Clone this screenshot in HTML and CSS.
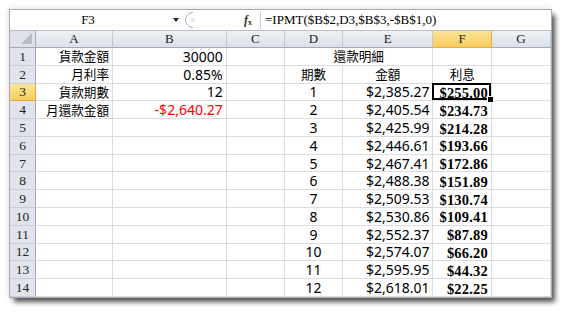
FILE: index.html
```html
<!DOCTYPE html>
<html lang="zh-Hant">
<head>
  <meta charset="UTF-8" />
  <title>IPMT</title>
  <link rel="stylesheet" href="styles.css">
</head>
<body>
  <div class="window">
    <div class="formula-bar">
      <div class="name-box">F3</div>
      <svg class="drop" width="12" height="8" viewBox="0 0 12 8"><polygon points="3,2 9,2 6,6" fill="#222"/></svg>
      <svg class="grip" width="20" height="18" viewBox="0 0 20 18"><path d="M10 1.5 A7.5 7.5 0 0 0 10 16.5" fill="none" stroke="#a9afb8" stroke-width="1"/><path d="M8 8h4M8 10h4" stroke="#d0d4da" stroke-width="1"/></svg>
      <span class="fx"><i>f</i><sub>x</sub></span>
      <div class="formula">=IPMT($B$2,D3,$B$3,-$B$1,0)</div>
    </div>

    <div class="sheet">
      <div class="corner"><svg width="11" height="11" viewBox="0 0 11 11"><polygon points="11,0 11,11 0,11" fill="#b8bec7"/></svg></div>
      <div class="ch">A</div>
      <div class="ch">B</div>
      <div class="ch">C</div>
      <div class="ch">D</div>
      <div class="ch">E</div>
      <div class="ch on">F</div>
      <div class="ch">G</div>

      <div class="rh">1</div>
      <div class="c lbl r">貨款金額</div>
      <div class="c r">30000</div>
      <div class="c"></div>
      <div class="c lbl ctr span2">還款明細</div>
      <div class="c"></div>
      <div class="c"></div>

      <div class="rh">2</div>
      <div class="c lbl r">月利率</div>
      <div class="c r">0.85%</div>
      <div class="c"></div>
      <div class="c lbl ctr">期數</div>
      <div class="c lbl ctr">金額</div>
      <div class="c lbl ctr">利息</div>
      <div class="c"></div>

      <div class="rh on">3</div>
      <div class="c lbl r">貨款期數</div>
      <div class="c r">12</div>
      <div class="c"></div>
      <div class="c ctr">1</div>
      <div class="c r">$2,385.27</div>
      <div class="c r int sel">$255.00</div>
      <div class="c"></div>

      <div class="rh">4</div>
      <div class="c lbl r">月還款金額</div>
      <div class="c r neg">-$2,640.27</div>
      <div class="c"></div>
      <div class="c ctr">2</div>
      <div class="c r">$2,405.54</div>
      <div class="c r int">$234.73</div>
      <div class="c"></div>

      <div class="rh">5</div>
      <div class="c"></div>
      <div class="c"></div>
      <div class="c"></div>
      <div class="c ctr">3</div>
      <div class="c r">$2,425.99</div>
      <div class="c r int">$214.28</div>
      <div class="c"></div>

      <div class="rh">6</div>
      <div class="c"></div>
      <div class="c"></div>
      <div class="c"></div>
      <div class="c ctr">4</div>
      <div class="c r">$2,446.61</div>
      <div class="c r int">$193.66</div>
      <div class="c"></div>

      <div class="rh">7</div>
      <div class="c"></div>
      <div class="c"></div>
      <div class="c"></div>
      <div class="c ctr">5</div>
      <div class="c r">$2,467.41</div>
      <div class="c r int">$172.86</div>
      <div class="c"></div>

      <div class="rh">8</div>
      <div class="c"></div>
      <div class="c"></div>
      <div class="c"></div>
      <div class="c ctr">6</div>
      <div class="c r">$2,488.38</div>
      <div class="c r int">$151.89</div>
      <div class="c"></div>

      <div class="rh">9</div>
      <div class="c"></div>
      <div class="c"></div>
      <div class="c"></div>
      <div class="c ctr">7</div>
      <div class="c r">$2,509.53</div>
      <div class="c r int">$130.74</div>
      <div class="c"></div>

      <div class="rh">10</div>
      <div class="c"></div>
      <div class="c"></div>
      <div class="c"></div>
      <div class="c ctr">8</div>
      <div class="c r">$2,530.86</div>
      <div class="c r int">$109.41</div>
      <div class="c"></div>

      <div class="rh">11</div>
      <div class="c"></div>
      <div class="c"></div>
      <div class="c"></div>
      <div class="c ctr">9</div>
      <div class="c r">$2,552.37</div>
      <div class="c r int">$87.89</div>
      <div class="c"></div>

      <div class="rh">12</div>
      <div class="c"></div>
      <div class="c"></div>
      <div class="c"></div>
      <div class="c ctr">10</div>
      <div class="c r">$2,574.07</div>
      <div class="c r int">$66.20</div>
      <div class="c"></div>

      <div class="rh">13</div>
      <div class="c"></div>
      <div class="c"></div>
      <div class="c"></div>
      <div class="c ctr">11</div>
      <div class="c r">$2,595.95</div>
      <div class="c r int">$44.32</div>
      <div class="c"></div>

      <div class="rh">14</div>
      <div class="c"></div>
      <div class="c"></div>
      <div class="c"></div>
      <div class="c ctr">12</div>
      <div class="c r">$2,618.01</div>
      <div class="c r int">$22.25</div>
      <div class="c"></div>
    </div>
  </div>
</body>
</html>
```

FILE: styles.css
```css
body {
  margin: 0;
  padding: 10px;
  background: #fff;
  font-family: "Noto Sans", "Noto Sans CJK TC", sans-serif;
  color: #000;
}

.window {
  width: 541px;
  height: 287px;
  background: #fff;
  box-shadow: 0 0 0 1px #a9adb3, 4px 5px 5px rgba(0,0,0,0.65), 0 0 8px rgba(0,0,0,0.18);
  display: flex;
  flex-direction: column;
  overflow: hidden;
}

/* formula bar */
.formula-bar {
  height: 21px;
  flex: none;
  box-sizing: border-box;
  border-bottom: 1px solid #b9bfc7;
  display: flex;
  align-items: center;
  font-family: "Liberation Serif", serif;
  font-size: 13px;
}

.name-box {
  width: 156px;
  text-align: center;
}

.drop {
  margin-left: 4px;
}

.grip {
  margin-left: 1px;
}

.fx {
  margin-left: 41px;
  width: 13px;
  font-size: 12px;
  font-weight: bold;
  color: #333;
  border-right: 1px solid #c9cdd3;
  padding-right: 3px;
  height: 17px;
  line-height: 16px;
}

.fx sub {
  font-size: 8px;
  vertical-align: -1px;
}

.formula {
  padding-left: 4px;
}

/* grid */
.sheet {
  height: 266px;
  flex: none;
  display: grid;
  grid-template-columns: 26px 77px 113.7px 58.3px 58px 90.5px 58.5px 59px;
  grid-template-rows: 17px repeat(14, 17.786px);
}

.sheet > div {
  box-sizing: border-box;
  min-width: 0;
  min-height: 0;
  overflow: visible;
}

.corner {
  background: #dfe3e9;
  border-right: 1px solid #a3aab4;
  border-bottom: 1px solid #a3aab4;
  display: flex;
  align-items: flex-end;
  justify-content: flex-end;
  padding: 0 3px 3px 0;
}

.ch {
  background: linear-gradient(#eef1f5, #dde2e8);
  border-right: 1px solid #c3c9d1;
  border-bottom: 1px solid #a3aab4;
  text-align: center;
  font-family: "Liberation Serif", serif;
  font-size: 13px;
  line-height: 16px;
  color: #222;
}

.rh {
  background: #e1e5eb;
  border-right: 1px solid #a3aab4;
  border-bottom: 1px solid #c8ced6;
  display: flex;
  align-items: center;
  justify-content: center;
  font-family: "Liberation Serif", serif;
  font-size: 13.5px;
  line-height: 14px;
  color: #222;
  padding-top: 1px;
}

.ch.on,
.rh.on {
  background: linear-gradient(#fbe59a, #f7cd5d);
  border-right-color: #e2ae42;
  border-bottom-color: #e2ae42;
}

.c {
  border-right: 1px solid #dadcdd;
  border-bottom: 1px solid #dadcdd;
  display: flex;
  align-items: center;
  font-size: 14px;
  line-height: 14px;
  white-space: nowrap;
  padding: 1px 3px 0 3px;
}

.r {
  justify-content: flex-end;
}

.ctr {
  justify-content: center;
}

.span2 {
  grid-column: span 2;
}

.lbl {
  font-family: "Noto Sans CJK TC", sans-serif;
  font-size: 12.6px;
  padding-top: 0;
}

.neg {
  color: #ff0000;
}

.int {
  font-family: "Liberation Serif", serif;
  font-weight: bold;
  font-size: 14.5px;
  letter-spacing: 0.2px;
  padding-right: 3px;
  padding-top: 2px;
}

.sel {
  position: relative;
}

.sel::before {
  content: "";
  position: absolute;
  left: -1px;
  top: -1px;
  right: 0;
  bottom: 0;
  border: 2px solid #000;
}

.sel::after {
  content: "";
  position: absolute;
  right: -3px;
  bottom: -3px;
  width: 5px;
  height: 5px;
  background: #000;
  border: 1px solid #fff;
}
```
